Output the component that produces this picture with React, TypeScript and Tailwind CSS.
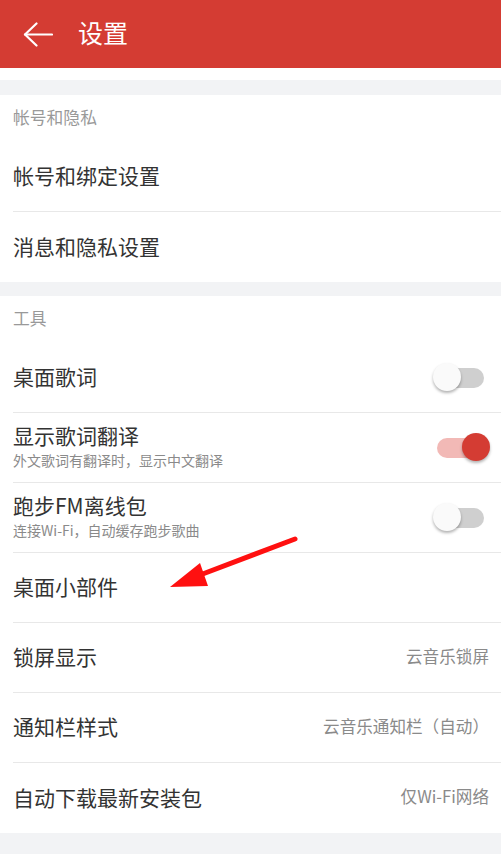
import React from 'react';

type Row = {
  title: string;
  sub?: string;
  value?: string;
  toggle?: 'on' | 'off';
};

const accountRows: Row[] = [{ title: '帐号和绑定设置' }, { title: '消息和隐私设置' }];

const toolRows: Row[] = [
  { title: '桌面歌词', toggle: 'off' },
  { title: '显示歌词翻译', sub: '外文歌词有翻译时，显示中文翻译', toggle: 'on' },
  { title: '跑步FM离线包', sub: '连接Wi-Fi，自动缓存跑步歌曲', toggle: 'off' },
  { title: '桌面小部件' },
  { title: '锁屏显示', value: '云音乐锁屏' },
  { title: '通知栏样式', value: '云音乐通知栏（自动）' },
  { title: '自动下载最新安装包', value: '仅Wi-Fi网络' },
];

function Toggle({ on }: { on: boolean }) {
  return (
    <div className="relative mr-[11px] h-[29px] w-[57px] shrink-0">
      <div
        className={`absolute left-[4px] top-[4.5px] h-[20px] w-[47px] rounded-full ${
          on ? 'bg-[#f2b9b6]' : 'bg-[#cfcfcf]'
        }`}
      />
      <div
        className={`absolute top-0 h-[28px] w-[28px] rounded-full shadow-[0_2px_3px_rgba(0,0,0,0.3)] ${
          on ? 'left-[29px] bg-[#d43c33]' : 'left-0 bg-[#fafafa]'
        }`}
      />
    </div>
  );
}

function SettingRow({ row, last }: { row: Row; last: boolean }) {
  return (
    <div className="pl-[13px]">
      <div
        className={`flex h-[70px] items-center justify-between ${
          last ? '' : 'border-b border-[#e8e8e8]'
        }`}
      >
        <div className="flex flex-col pb-[3px]">
          <span className="text-[21px] leading-[26px] text-[#333333]">{row.title}</span>
          {row.sub && (
            <span className="mt-[2px] text-[14px] leading-[20px] text-[#8a8a8a]">{row.sub}</span>
          )}
        </div>
        {row.toggle && <Toggle on={row.toggle === 'on'} />}
        {row.value && (
          <span className="mr-[12px] pb-[3px] text-[16.6px] text-[#8a8a8a]">{row.value}</span>
        )}
      </div>
    </div>
  );
}

function Section({ label, rows }: { label: string; rows: Row[] }) {
  return (
    <div className="bg-white">
      <div className="flex h-[47px] items-center pb-[2px] pl-[13px] text-[16.8px] text-[#999999]">
        {label}
      </div>
      {rows.map((r, i) => (
        <SettingRow key={r.title} row={r} last={i === rows.length - 1} />
      ))}
    </div>
  );
}

export default function App() {
  return (
    <div
      className="relative h-[854px] w-full overflow-hidden bg-[#f2f3f5]"
      style={{ fontFamily: '"Noto Sans CJK SC", "Noto Sans", sans-serif' }}
    >
      {/* Top bar */}
      <div className="flex h-[68px] items-center bg-[#d43c33]">
        <svg
          className="ml-[23px]"
          width="30"
          height="25"
          viewBox="0 0 30 25"
          fill="none"
          stroke="white"
          strokeWidth="2.2"
          strokeLinecap="round"
          strokeLinejoin="round"
        >
          <path d="M29 12.5H2" />
          <path d="M13.5 1.5L2 12.5l11.5 11" />
        </svg>
        <span className="ml-[25px] pb-[3px] text-[25px] text-white">设置</span>
      </div>
      <div className="h-[12px] bg-white" />
      <div className="h-[15px]" />

      <Section label="帐号和隐私" rows={accountRows} />
      <div className="h-[14px]" />
      <Section label="工具" rows={toolRows} />

      {/* annotation arrow */}
      <svg
        className="pointer-events-none absolute left-0 top-0"
        width="501"
        height="854"
        viewBox="0 0 501 854"
      >
        <line x1="295" y1="539" x2="200" y2="575" stroke="#ff1010" strokeWidth="5" strokeLinecap="round" />
        <polygon points="170,587 200,563 208,586" fill="#ff1010" />
      </svg>
    </div>
  );
}
